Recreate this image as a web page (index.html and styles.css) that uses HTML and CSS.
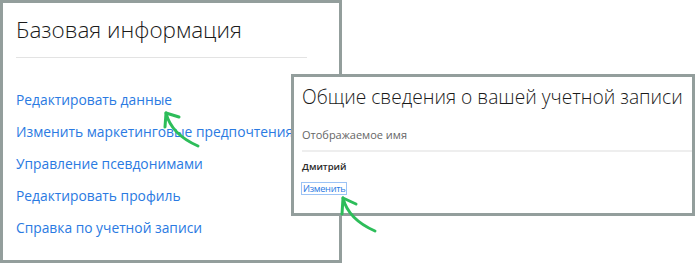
FILE: index.html
```html
<!DOCTYPE html>
<html lang="ru">
<head>
  <meta charset="UTF-8">
  <title>Базовая информация</title>
  <link rel="stylesheet" href="styles.css">
</head>
<body>
  <div class="scene">
    <div class="panel basic">
      <h1 class="title">Базовая информация</h1>
      <ul class="links">
        <li><a href="#">Редактировать данные</a></li>
        <li><a href="#">Изменить маркетинговые предпочтения</a></li>
        <li><a href="#">Управление псевдонимами</a></li>
        <li><a href="#">Редактировать профиль</a></li>
        <li><a href="#">Справка по учетной записи</a></li>
      </ul>
    </div>

    <div class="panel account">
      <h2 class="account-title">Общие сведения о вашей учетной записи</h2>
      <div class="field-label">Отображаемое имя</div>
      <div class="field-value">Дмитрий</div>
      <a href="#" class="change">Изменить</a>
    </div>

    <!-- стрелки-подсказки -->
    <svg class="arrow arrow-one" width="50" height="50" viewBox="0 0 50 50">
      <path d="M4 4 C 8 20, 20 30, 36 37" />
      <path d="M4 4 L 3 18 M4 4 L 17 8" />
    </svg>
    <svg class="arrow arrow-two" width="50" height="50" viewBox="0 0 50 50">
      <path d="M4 4 C 8 20, 20 30, 36 37" />
      <path d="M4 4 L 3 20 M4 4 L 17 10" />
    </svg>
  </div>
</body>
</html>
```

FILE: styles.css
```css
/* Общие стили */
* {
  box-sizing: border-box;
}
body {
  margin: 0;
  background: #fff;
  font-family: "Open Sans", "Noto Sans", sans-serif;
}
.scene {
  position: relative;
  width: 695px;
  height: 263px;
}
.panel {
  background: #fff;
  border: 3px solid #939e9c;
}

/* Левая панель */
.basic {
  width: 342px;
  height: 263px;
  padding: 13px 0 0 13px;
}
.title {
  margin: 0;
  width: 291px;
  padding: 1px 0 14px;
  font-size: 22.5px;
  font-weight: 300;
  color: #1a1a1a;
  border-bottom: 1px solid #e3e3e3;
  line-height: 26px;
}
.links {
  list-style: none;
  margin: 0;
  padding: 30px 0 0;
}
.links li {
  height: 32px;
  white-space: nowrap;
}
.links a {
  color: #2a7ae2;
  text-decoration: none;
  font-size: 13.8px;
  line-height: 20px;
}

/* Правая панель */
.account {
  position: absolute;
  left: 291px;
  top: 74px;
  width: 404px;
  height: 142px;
  padding: 7px 0 0 8px;
}
.account-title {
  margin: 0;
  font-size: 19.2px;
  font-weight: 300;
  color: #1a1a1a;
  line-height: 26px;
}
.field-label {
  margin-top: 17px;
  padding-bottom: 8px;
  border-bottom: 2px solid #eeeeee;
  font-size: 11px;
  color: #666;
}
.field-value {
  margin-top: 8px;
  font-size: 9.5px;
  font-weight: 600;
  color: #2a2a2a;
}
.change {
  display: inline-block;
  margin-top: 9px;
  margin-left: -1px;
  padding: 0 1px;
  font-size: 9.2px;
  letter-spacing: -0.3px;
  line-height: 11px;
  color: #2a7ae2;
  text-decoration: none;
  border: 1px solid #9cc3f5;
}

/* Стрелки */
.arrow {
  position: absolute;
  fill: none;
  stroke: #2dbd5a;
  stroke-width: 3;
  stroke-linecap: round;
  stroke-linejoin: round;
}
.arrow-one {
  left: 162px;
  top: 109px;
}
.arrow-two {
  left: 339px;
  top: 194px;
}
```
